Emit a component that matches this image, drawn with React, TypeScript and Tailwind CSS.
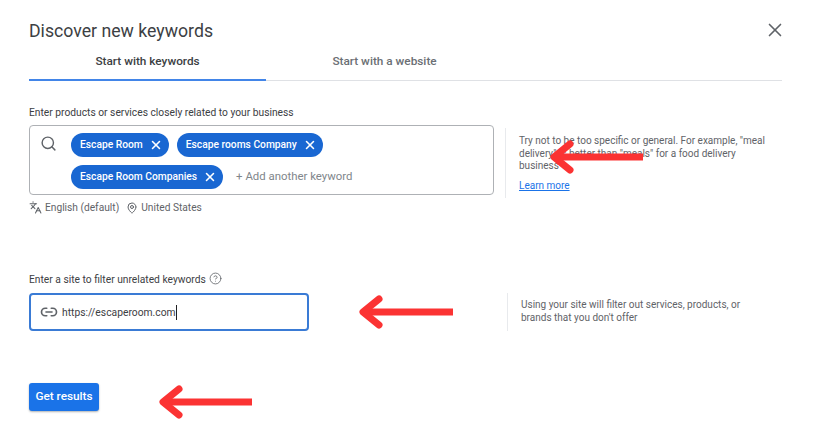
import { Link2, MapPin, Search, X, Languages, CircleHelp } from 'lucide-react'

const FONT = 'font-["Roboto","Liberation_Sans",sans-serif]'

function Chip({ label }: { label: string }) {
  return (
    <span className="flex h-6 items-center rounded-full bg-[#1967d2] pl-[9px] pr-[6px] text-[10.25px] font-medium text-white">
      {label}
      <X size={14} strokeWidth={2.6} className="ml-[6px]" />
    </span>
  )
}

function Arrow({ className, width }: { className: string; width: number }) {
  return (
    <svg className={`absolute ${className}`} width={width} height={34} viewBox={`0 0 ${width} 34`} fill="none">
      <path d={`M${width} 17H6`} stroke="#fb3333" strokeWidth="7" />
      <path d="M21 4L5 17L21 30" stroke="#fb3333" strokeWidth="7" strokeLinecap="round" strokeLinejoin="round" />
    </svg>
  )
}

export default function App() {
  return (
    <div className={`relative h-[424px] w-[835px] overflow-hidden bg-white pl-[29px] text-[#3c4043] ${FONT}`}>
      <div className="w-[753px]">
        <div className="flex h-[50px] items-start justify-between pt-[19px]">
          <h1 className="text-[17.7px] leading-6 text-[#3c4043]">Discover new keywords</h1>
          <X size={22} strokeWidth={1.8} className="-mr-[4px] -mt-[0.5px] text-[#5f6368]" />
        </div>

        <div className="flex h-[31px] border-b border-[#dfe1e5] text-[11.8px] font-medium">
          <div className="flex h-[31px] w-[237px] justify-center border-b-2 border-[#4285e8] pt-[3px] text-[#3c4043]">
            Start with keywords
          </div>
          <div className="flex w-[237px] justify-center pt-[3px] text-[#6b6f74]">Start with a website</div>
        </div>

        <p className="mt-[25px] text-[10.25px] leading-[14px] text-[#3c4043]">
          Enter products or services closely related to your business
        </p>

        <div className="mt-[5px] flex">
          <div className="h-[70px] w-[465px] rounded border border-[#aeb1b5]">
            <div className="flex">
              <Search size={17} strokeWidth={2} className="ml-[10px] mt-[9px] text-[#5f6368]" />
              <div className="ml-[14px] mt-[7px] flex flex-col gap-[8px]">
                <div className="flex gap-[8px]">
                  <Chip label="Escape Room" />
                  <Chip label="Escape rooms Company" />
                </div>
                <div className="flex items-center">
                  <Chip label="Escape Room Companies" />
                  <span className="ml-[13px] text-[11.4px] text-[#80868b]">+ Add another keyword</span>
                </div>
              </div>
            </div>
          </div>
          <div className="ml-[11px] mt-[3px] h-[70px] w-[270px] border-l border-[#e8eaed] pl-[13px] pt-[7px] text-[10px] leading-[12.5px] text-[#5f6368]">
            Try not to be too specific or general. For example, "meal
            <br />
            delivery" is better than "meals" for a food delivery
            <br />
            business
            <a className="mt-[7px] block text-[10px] text-[#1a73e8] underline">Learn more</a>
          </div>
        </div>

        <div className="mt-[2px] flex items-center text-[10.2px] text-[#5f6368]">
          <Languages size={13} strokeWidth={1.9} />
          <span className="ml-[3px]">English (default)</span>
          <MapPin size={12} strokeWidth={2} className="ml-[7px]" />
          <span className="ml-[3px]">United States</span>
        </div>

        <div className="mt-[57px] flex items-center text-[10.25px] leading-[14px] text-[#3c4043]">
          Enter a site to filter unrelated keywords
          <CircleHelp size={13} strokeWidth={1.5} className="mb-[3px] ml-[3px] text-[#5f6368]" />
        </div>

        <div className="mt-[5px] flex">
          <div className="flex h-[38px] w-[280px] items-center rounded border-2 border-[#3a7bd5] pl-[9px] text-[10.3px] text-[#3c4043]">
            <Link2 size={18} strokeWidth={2.2} className="text-[#5f6368]" />
            <span className="ml-[4px] border-r border-[#202124]">https://escaperoom.com</span>
          </div>
          <div className="ml-[198px] h-[38px] w-[275px] border-l border-[#e8eaed] pl-[13px] pt-[6px] text-[10px] leading-[12.5px] text-[#5f6368]">
            Using your site will filter out services, products, or
            <br />
            brands that you don't offer
          </div>
        </div>

        <button
          type="button"
          className="mt-[52px] flex h-[28px] w-[70px] items-center justify-center rounded-[3px] bg-[#1a73e8] text-[11.8px] font-medium text-white shadow-[0_1px_2px_rgba(60,64,67,0.4)]"
        >
          Get results
        </button>
      </div>

      <Arrow className="left-[549px] top-[140px]" width={94} />
      <Arrow className="left-[358px] top-[295px]" width={95} />
      <Arrow className="left-[158px] top-[385px]" width={94} />
    </div>
  )
}
